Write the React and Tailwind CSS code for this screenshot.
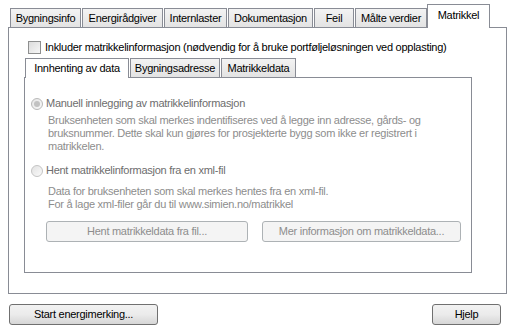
import React from "react";

const outerTabs = [
  { label: "Bygningsinfo", w: 71 },
  { label: "Energirådgiver", w: 81 },
  { label: "Internlaster", w: 63 },
  { label: "Dokumentasjon", w: 85 },
  { label: "Feil", w: 40 },
  { label: "Målte verdier", w: 72 },
];

const innerTabs = [
  { label: "Bygningsadresse", w: 90 },
  { label: "Matrikkeldata", w: 75 },
];

function Tab({ label, w }) {
  return (
    <div
      style={{ width: w }}
      className="h-[19px] mr-px border border-b-0 border-[#898c95] bg-gradient-to-b from-[#f3f3f3] to-[#e3e3e3] flex items-center justify-center text-black"
    >
      {label}
    </div>
  );
}

function Radio() {
  return (
    <span className="w-[12px] h-[12px] rounded-full border border-[#b9b9b9] bg-gradient-to-br from-[#e6e6e6] to-[#f8f8f8] flex items-center justify-center shrink-0">
      <span className="w-[6px] h-[6px] rounded-full bg-[#c2c2c2]" />
    </span>
  );
}

function EmptyRadio() {
  return (
    <span className="w-[12px] h-[12px] rounded-full border border-[#c4c4c4] bg-gradient-to-br from-[#e2e2e2] to-[#fafafa] shrink-0" />
  );
}

function Btn({ children, className = "", disabled }) {
  return (
    <div
      className={
        "h-[21px] rounded-[3px] border flex items-center justify-center " +
        (disabled
          ? "border-[#adb2b5] bg-[#f4f4f4] text-[#8d8d8d] "
          : "border-[#707070] bg-gradient-to-b from-[#f2f2f2] via-[#ebebeb] to-[#d6d6d6] text-black ") +
        className
      }
    >
      {children}
    </div>
  );
}

export default function App() {
  return (
    <div
      className="w-[510px] h-[333px] bg-white text-[11px] leading-[13px] tracking-[-0.27px] overflow-hidden"
      style={{ fontFamily: '"Liberation Sans", Arial, sans-serif' }}
    >
      <div className="pl-[8px] pt-[4px]">
        {/* outer tab strip */}
        <div className="flex items-end h-[23px] pl-[2px]">
          {outerTabs.map((t) => (
            <Tab key={t.label} {...t} />
          ))}
          <div className="relative z-10 -mb-px w-[63px] h-[24px] border border-b-0 border-[#898c95] bg-white flex items-start justify-center pt-[4px] -ml-px">
            Matrikkel
          </div>
        </div>

        {/* outer panel */}
        <div className="w-[499px] h-[267px] border border-[#898c95] bg-white pl-[15px] pt-[13px]">
          <div className="flex items-center gap-[4px] pl-[4px]">
            <span className="w-[13px] h-[13px] border border-[#8e8f8f] bg-gradient-to-br from-[#dcdcdc] to-[#f6f6f6]" />
            <span className="text-black">
              Inkluder matrikkelinformasjon (nødvendig for å bruke portføljeløsningen ved opplasting)
            </span>
          </div>

          {/* inner tab strip */}
          <div className="flex items-end h-[21px] pl-[1px] mt-[2px]">
            <div className="relative z-10 -mb-px w-[104px] h-[20px] border border-b-0 border-[#898c95] bg-white flex items-start justify-center pt-[3px] mr-px">
              Innhenting av data
            </div>
            {innerTabs.map((t) => (
              <Tab key={t.label} {...t} />
            ))}
          </div>

          {/* inner panel */}
          <div className="w-[448px] h-[196px] border border-[#898c95] bg-white pl-[6px] pt-[19px]">
            <div className="flex items-center gap-[3px] text-[#6d6d6d]">
              <Radio />
              <span>Manuell innlegging av matrikkelinformasjon</span>
            </div>
            <div className="pl-[17px] pt-[4px] text-[#8d8d8d] w-[420px]">
              Bruksenheten som skal merkes indentifiseres ved å legge inn adresse, gårds- og
              bruksnummer. Dette skal kun gjøres for prosjekterte bygg som ikke er registrert i
              matrikkelen.
            </div>

            <div className="flex items-center gap-[3px] text-[#6d6d6d] mt-[11px]">
              <EmptyRadio />
              <span>Hent matrikkelinformasjon fra en xml-fil</span>
            </div>
            <div className="pl-[17px] pt-[8px] text-[#8d8d8d]">
              <div>Data for bruksenheten som skal merkes hentes fra en xml-fil.</div>
              <div>For å lage xml-filer går du til www.simien.no/matrikkel</div>
            </div>

            <div className="flex gap-[14px] pl-[15px] mt-[10px]">
              <Btn disabled className="w-[202px]">Hent matrikkeldata fra fil...</Btn>
              <Btn disabled className="w-[199px]">Mer informasjon om matrikkeldata...</Btn>
            </div>
          </div>
        </div>

        {/* bottom buttons */}
        <div className="flex justify-between w-[493px] mt-[10px] pl-px">
          <Btn className="w-[149px]">Start energimerking...</Btn>
          <Btn className="w-[69px]">Hjelp</Btn>
        </div>
      </div>
    </div>
  );
}
